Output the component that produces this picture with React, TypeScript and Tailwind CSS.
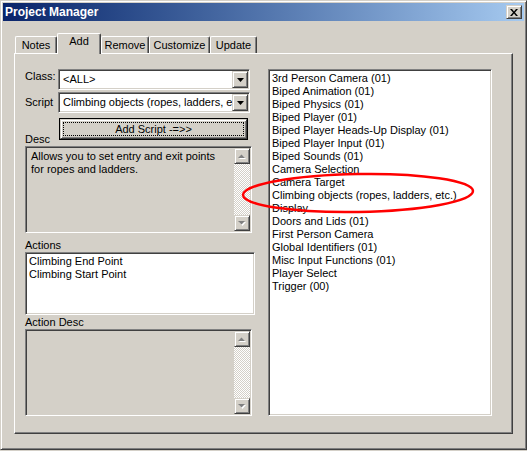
import React from "react";

const raised =
  "border border-t-[#d4d0c8] border-l-[#d4d0c8] border-r-[#404040] border-b-[#404040] shadow-[inset_1px_1px_0_#ffffff,inset_-1px_-1px_0_#808080]";
const sunken =
  "border border-t-[#808080] border-l-[#808080] border-r-white border-b-white shadow-[inset_1px_1px_0_#404040,inset_-1px_-1px_0_#d4d0c8]";

const scripts = [
  "3rd Person Camera (01)",
  "Biped Animation (01)",
  "Biped Physics (01)",
  "Biped Player (01)",
  "Biped Player Heads-Up Display (01)",
  "Biped Player Input (01)",
  "Biped Sounds (01)",
  "Camera Selection",
  "Camera Target",
  "Climbing objects (ropes, ladders, etc.)",
  "Display",
  "Doors and Lids (01)",
  "First Person Camera",
  "Global Identifiers (01)",
  "Misc Input Functions (01)",
  "Player Select",
  "Trigger (00)",
];

const tabs = [
  { label: "Notes", w: "w-[42px]" },
  { label: "Add", w: "w-[44px]", active: true },
  { label: "Remove", w: "w-[48px]" },
  { label: "Customize", w: "w-[61px]" },
  { label: "Update", w: "w-[47px]" },
];

function DownArrow({ color = "#000000" }: { color?: string }) {
  return (
    <svg width="7" height="4" viewBox="0 0 7 4">
      <polygon points="0,0 7,0 3.5,4" fill={color} />
    </svg>
  );
}

function ScrollBtn({ up }: { up?: boolean }) {
  return (
    <div className={`${raised} w-[16px] h-[16px] bg-[#d4d0c8] flex items-center justify-center`}>
      <svg width="8" height="5" viewBox="0 0 8 5">
        {up ? (
          <>
            <polygon points="1,5 8,5 4.5,1.5" fill="#ffffff" />
            <polygon points="0,4 7,4 3.5,0.5" fill="#808080" />
          </>
        ) : (
          <>
            <polygon points="1,1 8,1 4.5,5" fill="#ffffff" />
            <polygon points="0,0 7,0 3.5,3.5" fill="#808080" />
          </>
        )}
      </svg>
    </div>
  );
}

function ScrollBar() {
  return (
    <div className="w-[16px] h-full flex flex-col">
      <ScrollBtn up />
      <div className="flex-1 bg-[image:repeating-conic-gradient(#d4d0c8_0%_25%,#ffffff_0%_50%)] bg-[length:2px_2px]" />
      <ScrollBtn />
    </div>
  );
}

function Combo({ value }: { value: string }) {
  return (
    <div className={`${sunken} p-[1px] w-[192px] h-[21px] bg-white flex`}>
      <div className="flex-1 pl-[3px] leading-[17px] overflow-hidden whitespace-nowrap">{value}</div>
      <div className={`${raised} w-[16px] h-[17px] bg-[#d4d0c8] flex items-center justify-center`}>
        <DownArrow />
      </div>
    </div>
  );
}

export default function App() {
  return (
    <div className="relative w-[527px] h-[451px] bg-[#d4d0c8] text-[11px] text-black font-['Liberation_Sans',Arial,sans-serif]">
      <div
        className={`h-[450px] border border-t-[#d4d0c8] border-l-[#d4d0c8] border-r-[#404040] border-b-[#404040] shadow-[inset_1px_1px_0_#ffffff,inset_-1px_-1px_0_#808080] p-[2px] flex flex-col`}
      >
        {/* Title bar */}
        <div className="h-[18px] flex items-center justify-between pl-[2px] pr-[2px] bg-gradient-to-r from-[#0a246a] to-[#a6caf0]">
          <span className="text-white font-bold text-[12px] leading-[18px]">Project Manager</span>
          <div className={`${raised} w-[16px] h-[14px] bg-[#d4d0c8] flex items-center justify-center`}>
            <svg width="8" height="7" viewBox="0 0 8 7">
              <path d="M0 0h2l2 2.5L6 0h2L5 3.5 8 7H6L4 4.5 2 7H0l3-3.5z" fill="#000000" />
            </svg>
          </div>
        </div>

        {/* Body */}
        <div className="pl-[11px] pt-[12px]">
          {/* Tabs */}
          <div className="flex items-end h-[20px] ml-[1px]">
            {tabs.map((t) => (
              <div
                key={t.label}
                className={`${t.w} ${
                  t.active ? "h-[21px] -mb-[1px] z-10 pt-[1px]" : "h-[17px] pt-[2px]"
                } relative bg-[#d4d0c8] flex justify-center leading-[13px] border-t border-l border-r border-t-white border-l-white border-r-[#404040] shadow-[inset_-1px_0_0_#808080] rounded-tl-[2px] rounded-tr-[2px]`}
              >
                {t.label}
              </div>
            ))}
          </div>

          {/* Panel */}
          <div className="w-[499px] h-[381px] border border-t-white border-l-white border-r-[#404040] border-b-[#404040] shadow-[inset_-1px_-1px_0_#808080] pl-[10px] pt-[15px] flex gap-[13px]">
            {/* Left column */}
            <div className="w-[230px] flex flex-col">
              <div className="flex">
                <div className="w-[33px] pt-[1px] leading-[13px]">Class:</div>
                <Combo value="<ALL>" />
              </div>
              <div className="flex items-center mt-[2px]">
                <div className="w-[33px] leading-[13px]">Script</div>
                <Combo value="Climbing objects (ropes, ladders, e" />
              </div>
              <div className="mt-[5px] pl-[34px]">
                <div className="w-[189px] h-[22px] border border-black">
                  <div className={`${raised} w-full h-full bg-[#d4d0c8] p-[2px]`}>
                    <div className="w-full h-full border border-dotted border-black flex items-center justify-center leading-[12px]">
                      Add Script -=&gt;&gt;
                    </div>
                  </div>
                </div>
              </div>
              <div className="-mt-[7px] leading-[12px] h-[12px]">Desc</div>
              <div className={`${sunken} mt-[1px] p-[1px] w-[227px] h-[87px] flex`}>
                <div className="flex-1 pl-[4px] pt-[2px] leading-[13px]">
                  Allows you to set entry and exit points
                  <br />
                  for ropes and ladders.
                </div>
                <ScrollBar />
              </div>
              <div className="mt-[6px] leading-[12px] h-[12px]">Actions</div>
              <div className={`${sunken} mt-[1px] p-[1px] w-[230px] h-[63px] bg-white`}>
                <div className="pl-[2px] pt-[1px] leading-[13px]">
                  <div>Climbing End Point</div>
                  <div>Climbing Start Point</div>
                </div>
              </div>
              <div className="mt-[1px] leading-[12px] h-[12px]">Action Desc</div>
              <div className={`${sunken} mt-[1px] p-[1px] w-[227px] h-[87px] flex`}>
                <div className="flex-1" />
                <ScrollBar />
              </div>
            </div>

            {/* Right list */}
            <div className={`${sunken} p-[1px] w-[224px] h-[347px] bg-white`}>
              <div className="pl-[2px] pt-[1px] leading-[13px] whitespace-nowrap">
                {scripts.map((s) => (
                  <div key={s}>{s}</div>
                ))}
              </div>
            </div>
          </div>
        </div>
      </div>

      {/* red annotation ellipse */}
      <svg className="absolute left-0 top-0 pointer-events-none" width="527" height="451">
        <ellipse
          cx="358"
          cy="193"
          rx="115"
          ry="19"
          fill="none"
          stroke="#ff0000"
          strokeWidth="2.5"
          transform="rotate(-1 358 193)"
        />
      </svg>
    </div>
  );
}
